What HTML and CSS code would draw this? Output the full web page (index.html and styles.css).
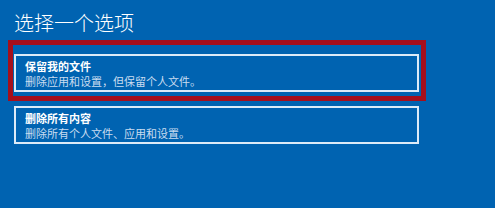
FILE: index.html
```html
<!DOCTYPE html>
<html lang="zh-CN">
<head>
  <meta charset="UTF-8" />
  <meta name="viewport" content="width=device-width, initial-scale=1.0"/>
  <title>选择一个选项</title>
  <link rel="stylesheet" href="styles.css">
</head>
<body>

  <h1>选择一个选项</h1>

  <div class="highlight">
    <div class="option">
      <div class="option-title">保留我的文件</div>
      <div class="option-desc">删除应用和设置，但保留个人文件。</div>
    </div>
  </div>

  <div class="option second">
    <div class="option-title">删除所有内容</div>
    <div class="option-desc">删除所有个人文件、应用和设置。</div>
  </div>

</body>
</html>
```

FILE: styles.css
```css
body {
  font-family: "Noto Sans CJK SC", "Noto Sans", sans-serif;
  background: #0063b1;
  color: #fff;
  margin: 0;
  padding: 9px 0 0 14px;
  height: 208px;
  box-sizing: border-box;
}

h1 {
  font-size: 20px;
  font-weight: 300;
  line-height: 28px;
  margin: 0 0 3px;
}

.highlight {
  width: 405px;
  margin-left: -6px;
  border: 5px solid #a50f1c;
  padding: 9px 2px 4px 1px;
}

.option {
  width: 405px;
  height: 38px;
  box-sizing: border-box;
  border: 2px solid #dcebf8;
  padding: 3px 9px 1px;
}

.option.second {
  margin-top: 5px;
}

.option-title {
  font-size: 11px;
  font-weight: 700;
  line-height: 15px;
}

.option-desc {
  font-size: 11px;
  line-height: 15px;
  color: #c9dcf0;
}
```
